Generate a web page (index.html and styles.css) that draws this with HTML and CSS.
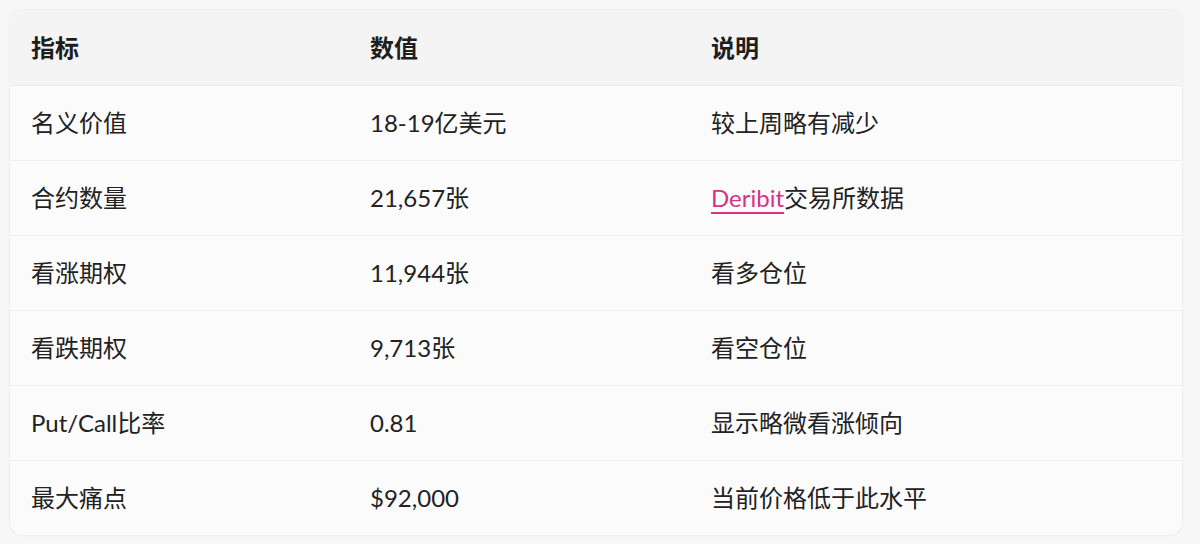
FILE: index.html
```html
<!DOCTYPE html>
<html lang="zh">
<head>
<meta charset="utf-8">
<link rel="stylesheet" href="styles.css">
</head>
<body>
<div class="card">
  <table class="data">
    <colgroup><col class="c1"><col class="c2"><col class="c3"></colgroup>
    <thead>
      <tr><th>指标</th><th>数值</th><th>说明</th></tr>
    </thead>
    <tbody>
      <tr><td>名义价值</td><td>18-19亿美元</td><td>较上周略有减少</td></tr>
      <tr><td>合约数量</td><td>21,657张</td><td><a class="link" href="#">Deribit</a>交易所数据</td></tr>
      <tr><td>看涨期权</td><td>11,944张</td><td>看多仓位</td></tr>
      <tr><td>看跌期权</td><td>9,713张</td><td>看空仓位</td></tr>
      <tr><td>Put/Call比率</td><td>0.81</td><td>显示略微看涨倾向</td></tr>
      <tr><td>最大痛点</td><td>$92,000</td><td>当前价格低于此水平</td></tr>
    </tbody>
  </table>
</div>
</body>
</html>
```
FILE: styles.css
```css
html, body {
  margin: 0;
  padding: 0;
  background: #f7f7f7;
}
body {
  padding: 10px 18px 9px 10px;
  font-family: "Lato", "Noto Sans CJK SC", sans-serif;
  color: #222;
}
.card {
  background: #fbfbfb;
  border-radius: 13px;
  box-shadow: 0 0 0 1px #efefef, 0 1px 3px rgba(0,0,0,0.04);
  overflow: hidden;
}
.data {
  width: 100%;
  border-collapse: collapse;
  table-layout: fixed;
}
.c1 { width: 339px; }
.c2 { width: 341px; }
.data th, .data td {
  text-align: left;
  padding: 20px 21px 20px;
  font-size: 24px;
  line-height: 34px;
  white-space: nowrap;
}
.data th {
  background: #f4f4f4;
  font-weight: 600;
  color: #1e1e1e;
  padding-top: 21px;
  padding-bottom: 20px;
}
.data thead tr {
  border-bottom: 1px solid #ececec;
}
.data tbody tr + tr {
  border-top: 1px solid #efefef;
}
.link {
  color: #d63384;
  text-decoration: underline;
  text-decoration-thickness: 2px;
  text-underline-offset: 5px;
}
```
